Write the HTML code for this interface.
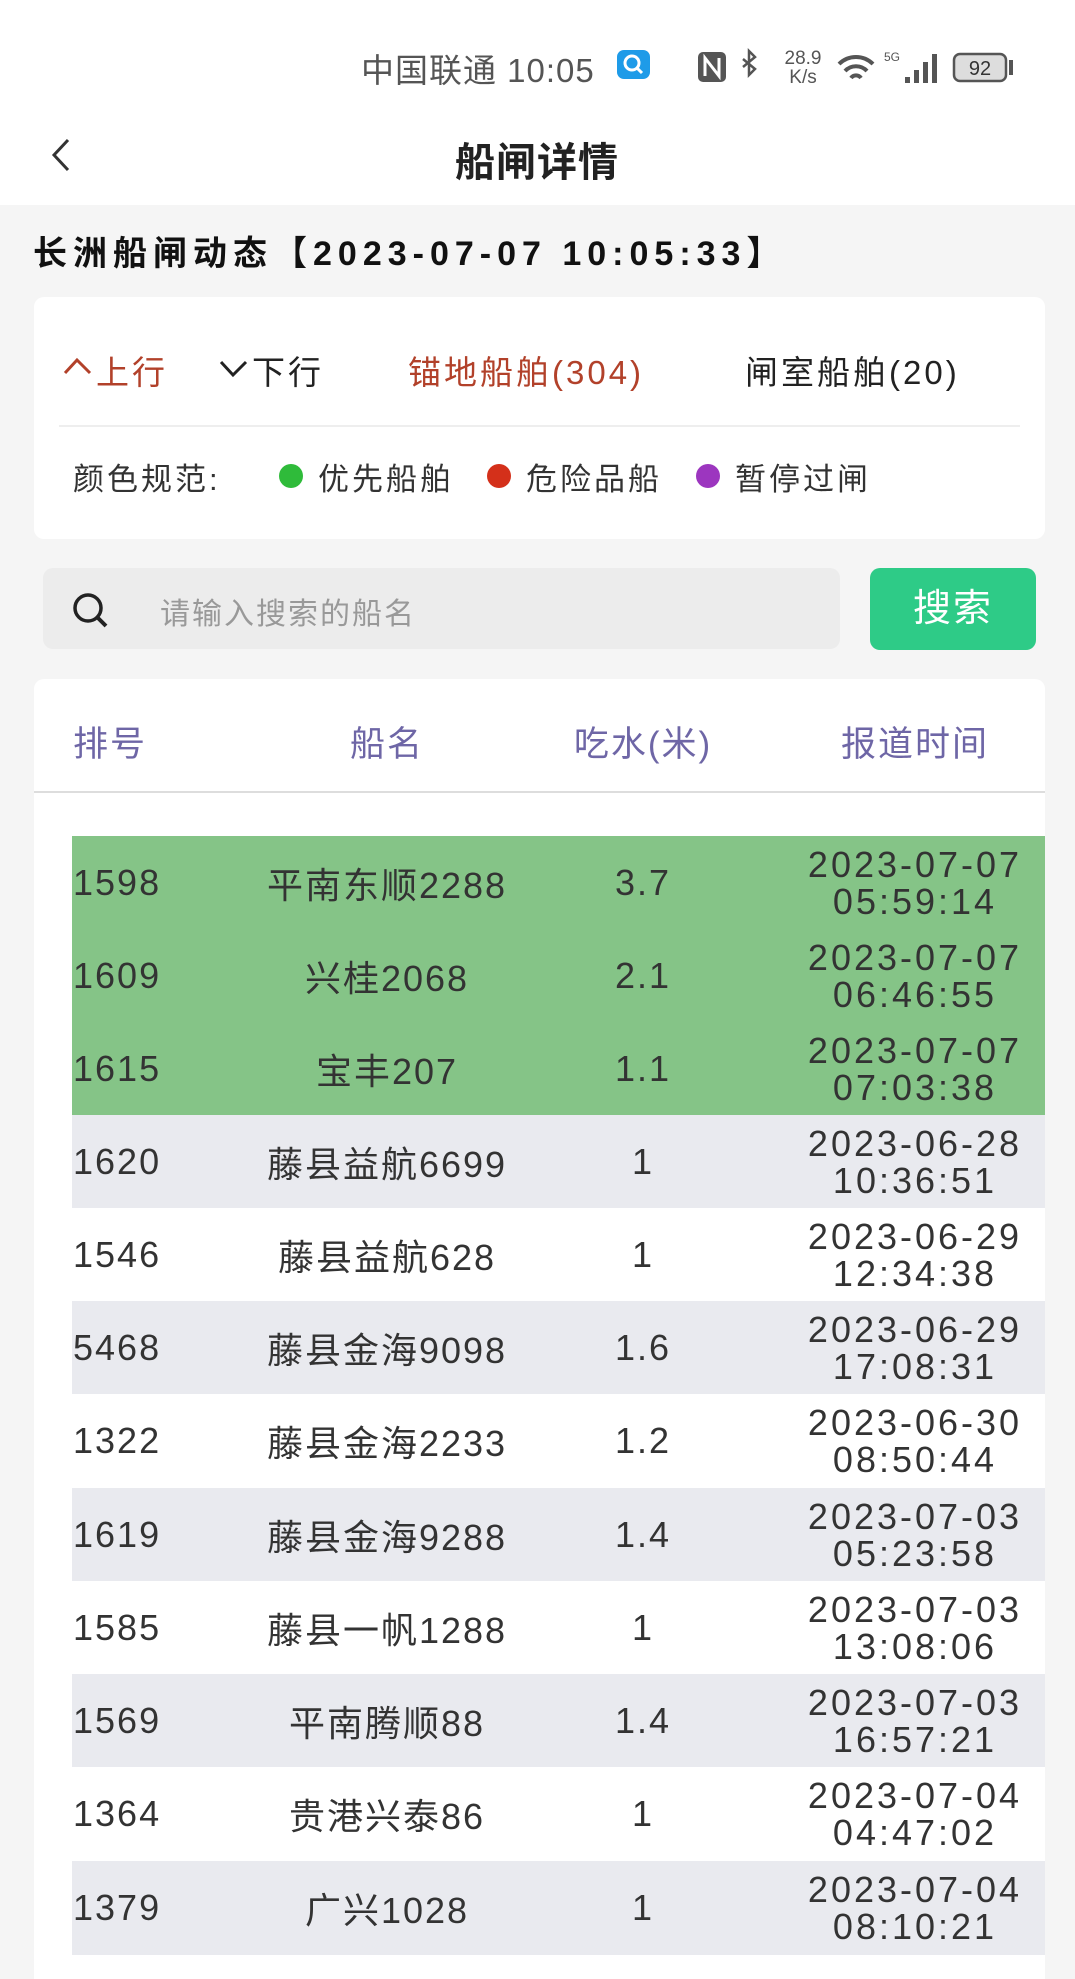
<!DOCTYPE html>
<html><head><meta charset="utf-8"><style>
*{margin:0;padding:0;box-sizing:border-box}
body{width:1075px;height:1915px;overflow:hidden;background:#f5f5f5;font-family:"Liberation Sans","Noto Sans CJK SC",sans-serif;color:#333;position:relative}
.abs{position:absolute;white-space:nowrap}
.hdr{position:absolute;left:0;top:0;width:1075px;height:205px;background:#fff}
.card{position:absolute;background:#fff;border-radius:10px}
.c{transform:translateX(-50%)}
.row{position:absolute;left:72px;width:973px;height:94px;font-size:36px;color:#333;letter-spacing:2px}
.row span{position:absolute;top:50%;transform:translateY(-50%);white-space:nowrap}
.row .n{left:1px}
.row .m{left:315px;transform:translate(-50%,-50%)}
.row .d{left:571px;transform:translate(-50%,-50%)}
.row .t{left:843px;transform:translate(-50%,-50%);text-align:center;line-height:37px;letter-spacing:3px}
.dot{position:absolute;width:24px;height:24px;border-radius:50%;top:464px}
.lg{position:absolute;top:454px;font-size:31px;letter-spacing:3px;white-space:nowrap}
.tab{position:absolute;top:346px;font-size:33px;letter-spacing:3px;white-space:nowrap}
.th{position:absolute;top:716px;font-size:35px;color:#6e66a6;letter-spacing:2px;white-space:nowrap}
</style></head><body>
<div class="hdr"></div>
<div class="abs" style="left:361px;top:44px;font-size:33px;color:#555;letter-spacing:1px">中国联通 10:05</div>
<div class="abs" style="left:617px;top:50px;width:33px;height:29px;background:#1e9be8;border-radius:7px"></div>
<svg class="abs" style="left:617px;top:50px" width="33" height="29"><circle cx="15" cy="13" r="7" fill="none" stroke="#fff" stroke-width="3"/><path d="M20 18l5 5" stroke="#fff" stroke-width="3"/></svg>
<svg class="abs" style="left:695px;top:46px" width="340" height="40">
<rect x="3" y="6" width="28" height="30" rx="5" fill="#555"/><path d="M10 30V12l14 18V12" stroke="#fff" stroke-width="3" fill="none"/>
<path d="M48 13l12 10-6 6V5l6 6-12 10" stroke="#555" stroke-width="2.5" fill="none"/>
<text x="108" y="18" font-size="19" fill="#555" font-family="Liberation Sans" text-anchor="middle">28.9</text>
<text x="108" y="37" font-size="19" fill="#555" font-family="Liberation Sans" text-anchor="middle">K/s</text>
<path d="M144 18a24 24 0 0 1 34 0M150 25a15 15 0 0 1 22 0M156 32a6 6 0 0 1 10 0" stroke="#555" stroke-width="4" fill="none"/>
<text x="189" y="15" font-size="12" fill="#555" font-family="Liberation Sans">5G</text>
<rect x="210" y="31" width="5" height="6" fill="#555"/><rect x="219" y="24" width="5" height="13" fill="#555"/><rect x="228" y="16" width="5" height="21" fill="#555"/><rect x="237" y="8" width="5" height="29" fill="#555"/>
<rect x="259" y="8" width="52" height="27" rx="6" fill="#ddd" stroke="#555" stroke-width="2.5"/><text x="285" y="29" font-size="20" fill="#333" text-anchor="middle" font-family="Liberation Sans">92</text><rect x="314" y="14" width="4" height="15" fill="#555"/>
</svg>
<svg class="abs" style="left:46px;top:136px" width="30" height="38"><path d="M22 4L8 19l14 15" stroke="#333" stroke-width="3" fill="none"/></svg>
<div class="abs c" style="left:537px;top:130px;font-size:40px;font-weight:bold;color:#222;letter-spacing:1px">船闸详情</div>
<div class="abs" style="left:33px;top:226px;font-size:34px;font-weight:bold;color:#111;letter-spacing:6px">长洲船闸动态【2023-07-07 10:05:33】</div>
<div class="card" style="left:34px;top:297px;width:1011px;height:242px"></div>
<svg class="abs" style="left:62px;top:355px" width="32" height="22"><path d="M3 18L15 5l13 13" stroke="#b2412a" stroke-width="3" fill="none"/></svg>
<div class="tab" style="left:96px;color:#b2412a">上行</div>
<svg class="abs" style="left:218px;top:358px" width="32" height="22"><path d="M3 4l12 13L28 4" stroke="#222" stroke-width="3" fill="none"/></svg>
<div class="tab" style="left:252px;color:#222">下行</div>
<div class="tab" style="left:408px;color:#b2412a">锚地船舶(304)</div>
<div class="tab" style="left:745px;color:#222">闸室船舶(20)</div>
<div class="abs" style="left:59px;top:425px;width:961px;height:2px;background:#eee"></div>
<div class="lg" style="left:73px">颜色规范:</div>
<div class="dot" style="left:279px;background:#2fbb3a"></div><div class="lg" style="left:318px">优先船舶</div>
<div class="dot" style="left:487px;background:#d4301a"></div><div class="lg" style="left:526px">危险品船</div>
<div class="dot" style="left:696px;background:#9c36bf"></div><div class="lg" style="left:735px">暂停过闸</div>
<div class="abs" style="left:43px;top:568px;width:797px;height:81px;background:#ececec;border-radius:10px"></div>
<svg class="abs" style="left:70px;top:590px" width="42" height="42"><circle cx="18" cy="18" r="13" fill="none" stroke="#222" stroke-width="3.5"/><path d="M27 27l9 9" stroke="#222" stroke-width="4"/></svg>
<div class="abs" style="left:160px;top:589px;font-size:30px;color:#999;letter-spacing:2px">请输入搜索的船名</div>
<div class="abs" style="left:870px;top:568px;width:166px;height:82px;background:#2ecb87;border-radius:10px;color:#fff;font-size:38px;text-align:center;line-height:82px;letter-spacing:2px">搜索</div>
<div class="card" style="left:34px;top:679px;width:1011px;height:1300px;border-radius:10px 10px 0 0"></div>
<div class="abs" style="left:34px;top:791px;width:1011px;height:2px;background:#ddd"></div>
<div class="th" style="left:73px">排号</div>
<div class="th c" style="left:387px">船名</div>
<div class="th c" style="left:643px">吃水(米)</div>
<div class="th c" style="left:915px">报道时间</div>

<div class="row" style="top:836px;background:#85c487"><span class="n">1598</span><span class="m">平南东顺2288</span><span class="d">3.7</span><span class="t">2023-07-07<br>05:59:14</span></div>
<div class="row" style="top:929px;background:#85c487"><span class="n">1609</span><span class="m">兴桂2068</span><span class="d">2.1</span><span class="t">2023-07-07<br>06:46:55</span></div>
<div class="row" style="top:1022px;background:#85c487;height:93px"><span class="n">1615</span><span class="m">宝丰207</span><span class="d">1.1</span><span class="t">2023-07-07<br>07:03:38</span></div>
<div class="row" style="top:1115px;background:#e9eaef"><span class="n">1620</span><span class="m">藤县益航6699</span><span class="d">1</span><span class="t">2023-06-28<br>10:36:51</span></div>
<div class="row" style="top:1208px;background:#fff"><span class="n">1546</span><span class="m">藤县益航628</span><span class="d">1</span><span class="t">2023-06-29<br>12:34:38</span></div>
<div class="row" style="top:1301px;background:#e9eaef"><span class="n">5468</span><span class="m">藤县金海9098</span><span class="d">1.6</span><span class="t">2023-06-29<br>17:08:31</span></div>
<div class="row" style="top:1394px;background:#fff"><span class="n">1322</span><span class="m">藤县金海2233</span><span class="d">1.2</span><span class="t">2023-06-30<br>08:50:44</span></div>
<div class="row" style="top:1488px;background:#e9eaef"><span class="n">1619</span><span class="m">藤县金海9288</span><span class="d">1.4</span><span class="t">2023-07-03<br>05:23:58</span></div>
<div class="row" style="top:1581px;background:#fff"><span class="n">1585</span><span class="m">藤县一帆1288</span><span class="d">1</span><span class="t">2023-07-03<br>13:08:06</span></div>
<div class="row" style="top:1674px;background:#e9eaef"><span class="n">1569</span><span class="m">平南腾顺88</span><span class="d">1.4</span><span class="t">2023-07-03<br>16:57:21</span></div>
<div class="row" style="top:1767px;background:#fff"><span class="n">1364</span><span class="m">贵港兴泰86</span><span class="d">1</span><span class="t">2023-07-04<br>04:47:02</span></div>
<div class="row" style="top:1861px;background:#e9eaef"><span class="n">1379</span><span class="m">广兴1028</span><span class="d">1</span><span class="t">2023-07-04<br>08:10:21</span></div>
</body></html>
